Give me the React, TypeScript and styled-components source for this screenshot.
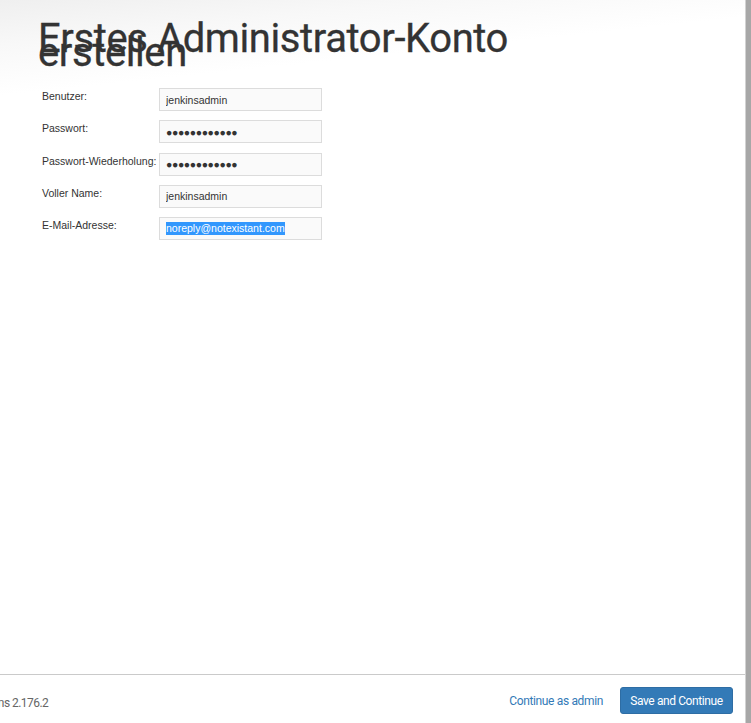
import React from "react";
import styled, { createGlobalStyle } from "styled-components";

const Global = createGlobalStyle`
  html, body { margin: 0; padding: 0; background: #fff; }
  body { font-family: "Liberation Sans", Arial, sans-serif; color: #333; }
  * { box-sizing: border-box; }
`;

const Screen = styled.div`
  display: flex;
  width: 751px;
  height: 723px;
  overflow: hidden;
`;

const Panel = styled.div`
  width: 746px;
  flex: none;
  display: flex;
  flex-direction: column;
  background: #fff;
  border-right: 1px solid #d2d2d2;
  overflow: hidden;
`;

const Backdrop = styled.div`
  flex: 1;
  background: #a7a7a7;
`;

const Content = styled.div`
  flex: 1;
  padding: 32px 0 0 38px;
  background: linear-gradient(174deg, #efefef 0px, #f8f8f8 45px, #ffffff 95px);
`;

const Title = styled.h1`
  margin: 0;
  width: 480px;
  font-family: Roboto, "Noto Sans", sans-serif;
  font-weight: 400;
  font-size: 40px;
  line-height: 14px;
  letter-spacing: -0.4px;
  color: #333;
  -webkit-text-stroke: 0.3px #333;
`;

const Form = styled.div`
  display: grid;
  grid-template-columns: 117px 163px;
  row-gap: 9.3px;
  margin: 28px 0 0 4px;
`;

const Label = styled.label`
  font-size: 10.5px;
  line-height: 13px;
  padding-top: 2px;
  color: #333;
  white-space: nowrap;
`;

const fieldCss = `
  width: 163px;
  height: 23px;
  border: 1px solid #dcdcdc;
  background: #fafafa;
  padding: 0 6px;
  font-family: "Liberation Sans", Arial, sans-serif;
  font-size: 10.5px;
  color: #333;
`;

const Input = styled.input<{ $secret?: boolean }>`
  ${fieldCss}
  outline: none;
  margin: 0;
  letter-spacing: ${(p) => (p.$secret ? "-0.4px" : "0")};
`;

const FieldBox = styled.div`
  ${fieldCss}
  display: flex;
  align-items: center;
`;

const Selected = styled.span`
  background: #3297fd;
  color: #fff;
  line-height: 13px;
`;

const Footer = styled.div`
  flex: none;
  height: 49px;
  border-top: 1px solid #cacaca;
  display: flex;
  align-items: flex-start;
  padding: 12px 12px 0 0;
  font-family: Roboto, "Noto Sans", sans-serif;
`;

const Version = styled.div`
  margin-left: -28px;
  margin-top: 9px;
  font-size: 12px;
  color: #666;
  letter-spacing: -0.55px;
  flex: 1;
`;

const Link = styled.a`
  margin-top: 7px;
  margin-right: 17px;
  font-size: 12px;
  letter-spacing: -0.35px;
  color: #337ab7;
  text-decoration: none;
  cursor: pointer;
`;

const Button = styled.button`
  width: 113px;
  height: 27px;
  padding: 0;
  border: 1px solid #2e6da4;
  border-radius: 3px;
  background: #337ab7;
  color: #fff;
  font-family: Roboto, "Noto Sans", sans-serif;
  font-size: 12px;
  letter-spacing: -0.4px;
  cursor: pointer;
`;

const dots = "\u25CF".repeat(12);

export default function App() {
  return (
    <>
      <Global />
      <Screen>
        <Panel>
          <Content>
            <Title>Erstes Administrator-Konto erstellen</Title>
            <Form>
              <Label>Benutzer:</Label>
              <Input readOnly defaultValue="jenkinsadmin" />
              <Label>Passwort:</Label>
              <Input readOnly $secret defaultValue={dots} />
              <Label>Passwort-Wiederholung:</Label>
              <Input readOnly $secret defaultValue={dots} />
              <Label>Voller Name:</Label>
              <Input readOnly defaultValue="jenkinsadmin" />
              <Label>E-Mail-Adresse:</Label>
              <FieldBox>
                <Selected>noreply@notexistant.com</Selected>
              </FieldBox>
            </Form>
          </Content>
          <Footer>
            <Version>Jenkins 2.176.2</Version>
            <Link>Continue as admin</Link>
            <Button>Save and Continue</Button>
          </Footer>
        </Panel>
        <Backdrop />
      </Screen>
    </>
  );
}
